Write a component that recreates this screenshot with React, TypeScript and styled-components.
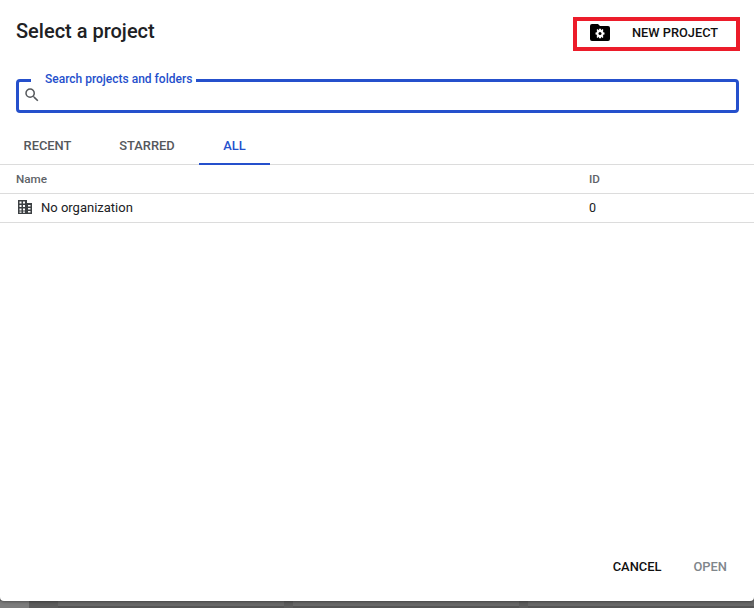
import React from "react";
import styled, { createGlobalStyle } from "styled-components";

const Global = createGlobalStyle`
  html, body { margin: 0; padding: 0; width: 754px; height: 608px; overflow: hidden; background: #6a6a6a; }
  * { box-sizing: border-box; }
  body { font-family: Roboto, "Liberation Sans", sans-serif; }
`;

const Page = styled.div`
  width: 754px;
  height: 608px;
  display: flex;
  flex-direction: column;
  background: #666;
`;
const Dialog = styled.div`
  width: 754px;
  height: 601px;
  flex: none;
  background: #fff;
  border-radius: 0 0 4px 4px;
  display: flex;
  flex-direction: column;
  box-shadow: 0 1px 3px rgba(0, 0, 0, 0.35);
  position: relative;
`;
const Backdrop = styled.div`
  flex: 1;
  display: flex;
  gap: 9px;
  padding-left: 58px;
  background: linear-gradient(90deg, #7c7c7c 0, #7c7c7c 29px, #5c5c5c 29px);
`;
const BackdropCard = styled.div`
  width: 247px;
  background: #686868;
  border-bottom: 2px solid #555;
`;
const Header = styled.div`
  height: 79px;
  flex: none;
  display: flex;
  justify-content: space-between;
  align-items: flex-start;
  padding: 17px 14px 0 16px;
`;
const Title = styled.h1`
  margin: 2px 0 0;
  font-size: 20px;
  line-height: 24px;
  font-weight: 500;
  letter-spacing: 0;
  color: #202124;
`;
const NewProject = styled.button`
  width: 167px;
  height: 34px;
  border: 4px solid #ec1c2a;
  background: #fff;
  padding: 0 0 4px 13px;
  display: flex;
  align-items: center;
  gap: 22px;
  font-family: inherit;
  font-size: 12.8px;
  font-weight: 500;
  letter-spacing: 0;
  color: #111;
`;
const SearchBox = styled.div`
  height: 34px;
  flex: none;
  margin: 0 15px 0 16px;
  border: 3px solid #2550cc;
  border-radius: 4px;
  display: flex;
  align-items: center;
  padding: 0 0 3px 4px;
  position: relative;
`;
const FloatingLabel = styled.label`
  position: absolute;
  left: 12px;
  top: -10px;
  padding: 0 4px 0 14px;
  background: #fff;
  font-size: 12px;
  line-height: 14px;
  font-weight: 500;
  letter-spacing: 0;
  color: #2550cc;
  white-space: nowrap;
`;
const Tabs = styled.div`
  height: 52px;
  flex: none;
  display: flex;
  align-items: flex-end;
  border-bottom: 1px solid #dcdcdc;
`;
const Tab = styled.div<{ $active?: boolean; $width: number }>`
  width: ${(p) => p.$width}px;
  height: 37px;
  display: flex;
  justify-content: center;
  align-items: center;
  font-size: 12.9px;
  font-weight: 500;
  color: ${(p) => (p.$active ? "#2550cc" : "#55585c")};
  border-bottom: 2px solid ${(p) => (p.$active ? "#2550cc" : "transparent")};
  margin-bottom: -1px;
`;
const Row = styled.div<{ $height: number }>`
  height: ${(p) => p.$height}px;
  flex: none;
  display: grid;
  grid-template-columns: 573px 1fr;
  align-items: center;
  padding-left: 16px;
  border-bottom: 1px solid #dcdcdc;
`;
const HeadCell = styled.div`
  font-size: 11.7px;
  font-weight: 500;
  color: #5f6368;
`;
const NameCell = styled.div`
  display: flex;
  align-items: center;
  gap: 9px;
  margin: -2px 0 0 2px;
  font-size: 13px;
  color: #202124;
`;
const IdCell = styled.div`
  margin-top: -2px;
  font-size: 12.5px;
  color: #202124;
`;
const Footer = styled.div`
  margin-top: auto;
  height: 42px;
  display: flex;
  justify-content: flex-end;
  gap: 32px;
  padding-right: 27px;
`;
const FooterButton = styled.span<{ $disabled?: boolean }>`
  font-size: 12.9px;
  line-height: 16px;
  font-weight: 500;
  color: ${(p) => (p.$disabled ? "#80868b" : "#111")};
`;

const FolderGear = () => (
  <svg width="20" height="17" viewBox="0 0 20 17">
    <path fill="#000" d="M2 0h6l2 2h8a2 2 0 0 1 2 2v11a2 2 0 0 1-2 2H2a2 2 0 0 1-2-2V2a2 2 0 0 1 2-2z" />
    <g fill="#fff">
      <circle cx="10" cy="9.5" r="3.6" />
      <path d="M8.9 4.7h2.2v9.6H8.9zM5.5 8.5h9v2h-9z" />
      <path d="M6.5 6.1l1.2-1 5.8 7.8-1.2 1zM13.5 6.1l-1.2-1-5.8 7.8 1.2 1z" />
    </g>
    <circle cx="10" cy="9.5" r="1.5" fill="#000" />
  </svg>
);

const SearchIcon = () => (
  <svg width="18" height="18" viewBox="0 0 24 24">
    <path
      fill="#55585c"
      d="M15.5 14h-.79l-.28-.27A6.47 6.47 0 0 0 16 9.5 6.5 6.5 0 1 0 9.5 16c1.61 0 3.09-.59 4.23-1.57l.27.28v.79l5 4.99L20.49 19l-4.99-5zm-6 0C7.01 14 5 11.99 5 9.5S7.01 5 9.5 5 14 7.01 14 9.5 11.99 14 9.5 14z"
    />
  </svg>
);

const Building = () => (
  <svg width="14" height="14" viewBox="0 0 14 14">
    <path
      fill="#3c4043"
      fillRule="evenodd"
      d="M0 0h9v3h5v11H0zM1.5 1.5v2h2v-2zm3.5 0v2h2v-2zM1.5 5v2h2V5zM5 5v2h2V5zM1.5 8.5v2h2v-2zm3.5 0v2h2v-2zM1.5 11.5v1.2h2v-1.2zm3.5 0v1.2h2v-1.2zM10 5v1.5h2.5V5zm0 3v1.5h2.5V8zm0 3v1.5h2.5V11z"
    />
  </svg>
);

export default function App() {
  return (
    <Page>
      <Global />
      <Dialog>
        <Header>
          <Title>Select a project</Title>
          <NewProject>
            <FolderGear />
            NEW PROJECT
          </NewProject>
        </Header>
        <SearchBox>
          <FloatingLabel>Search projects and folders</FloatingLabel>
          <SearchIcon />
        </SearchBox>
        <Tabs>
          <Tab $width={95}>RECENT</Tab>
          <Tab $width={104}>STARRED</Tab>
          <Tab $width={71} $active>ALL</Tab>
        </Tabs>
        <Row $height={29}>
          <HeadCell>Name</HeadCell>
          <HeadCell>ID</HeadCell>
        </Row>
        <Row $height={29}>
          <NameCell>
            <Building />
            No organization
          </NameCell>
          <IdCell>0</IdCell>
        </Row>
        <Footer>
          <FooterButton>CANCEL</FooterButton>
          <FooterButton $disabled>OPEN</FooterButton>
        </Footer>
      </Dialog>
      <Backdrop>
        <BackdropCard />
        <BackdropCard />
        <BackdropCard />
      </Backdrop>
    </Page>
  );
}
